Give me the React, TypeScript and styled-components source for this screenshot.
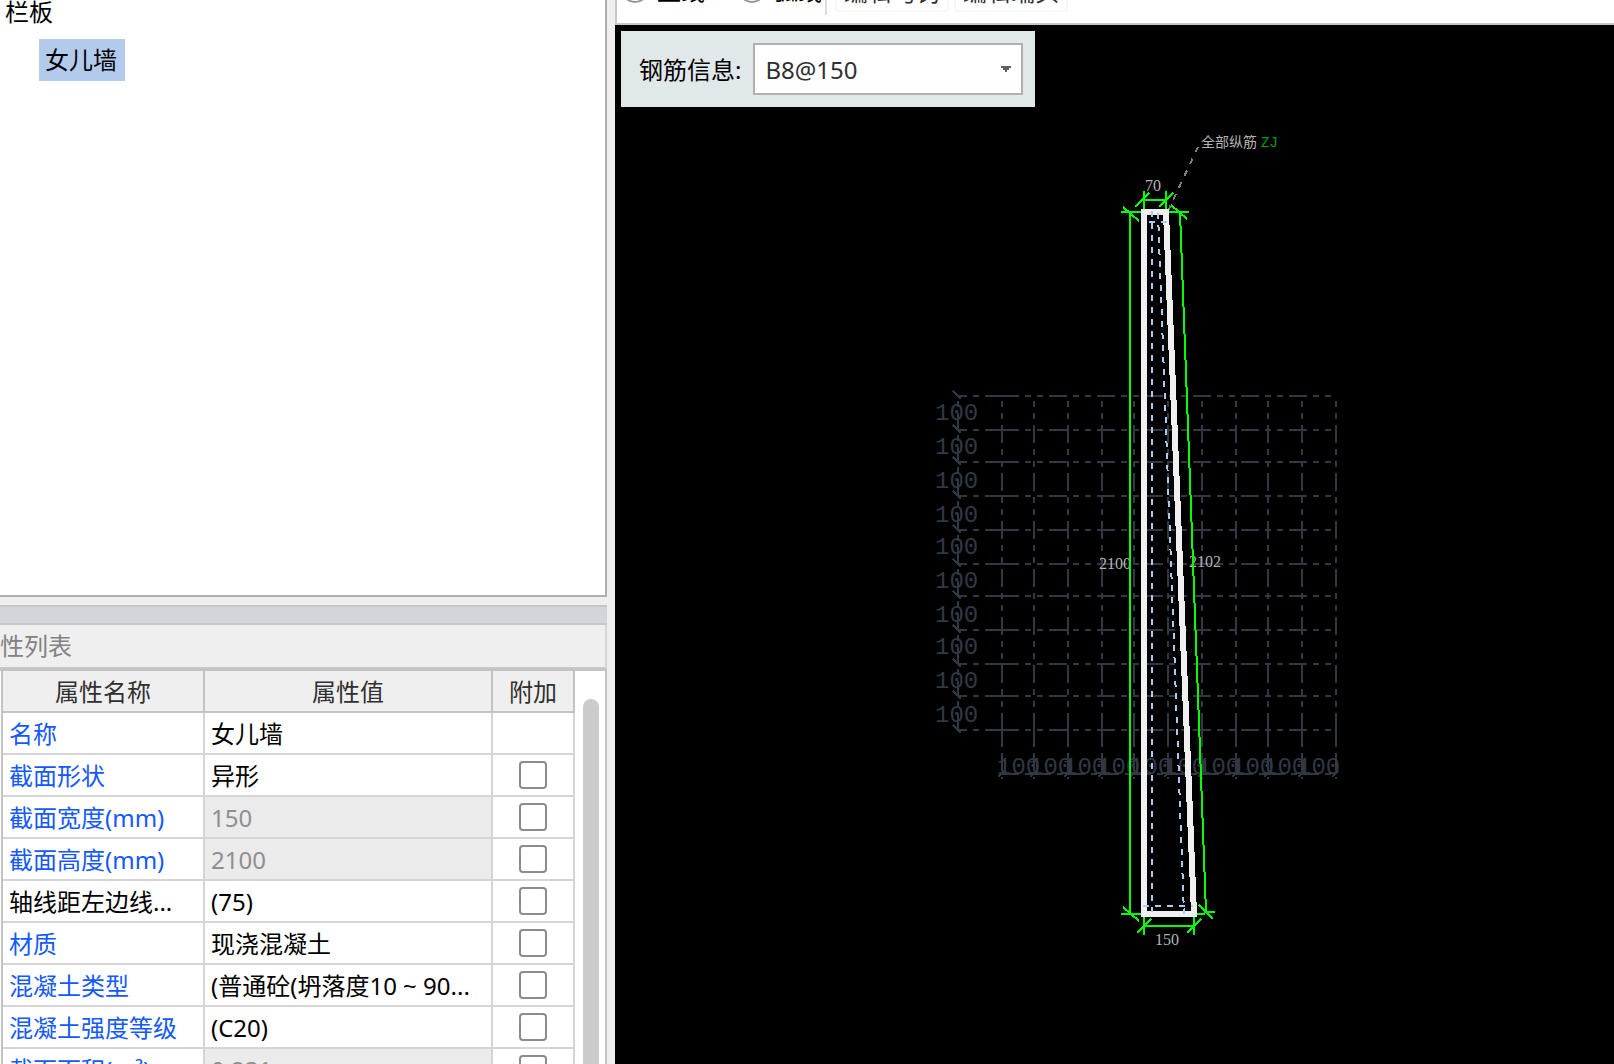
import React from "react";
import styled, { createGlobalStyle } from "styled-components";

const GlobalStyle = createGlobalStyle`
  * { box-sizing: border-box; }
  html, body { margin: 0; height: 100%; overflow: hidden; }
  body, button, input, select {
    font-family: "Noto Sans", "Noto Sans CJK SC", sans-serif;
    font-size: 24px;
    line-height: 32px;
  }
`;

const Window = styled.div`
  display: grid;
  grid-template-columns: minmax(300px, 607px) minmax(0, 1fr);
  grid-template-rows: minmax(0, 1fr);
  column-gap: 8px;
  height: 100vh;
  overflow: hidden;
  background: #efefef;
`;

const Sidebar = styled.aside`
  display: grid;
  grid-template-rows: minmax(0, 597fr) 28px minmax(0, 439fr);
  min-width: 0;
`;

const Tree = styled.nav`
  display: flex;
  flex-direction: column;
  align-items: flex-start;
  background: #fff;
  border: solid #b0b0b0;
  border-width: 0 2px 2px 0;
  overflow: hidden;
`;

const TreeGroup = styled.div`
  height: 39px;
  padding-left: 5px;
  line-height: 24px;
`;

const TreeItem = styled.button`
  height: 42px;
  margin-left: 39px;
  padding: 0 8px 0 6px;
  border: 0;
  color: #000;
  background: #b2cbec;
`;

const Splitter = styled.div`
  height: 20px;
  margin-top: 8px;
  background: #d3d5da;
  border: solid #c3c8cc;
  border-width: 2px 0;
`;

const PropertyPanel = styled.section`
  display: flex;
  flex-direction: column;
  min-height: 0;
`;

const PanelTitle = styled.h2`
  flex: none;
  height: 44px;
  margin: 0;
  font-size: 24px;
  font-weight: 400;
  line-height: 42px;
  color: #828282;
  border-right: 2px solid #d5d5d5;
  border-bottom: 2px solid #c3c8cc;
`;

const TableArea = styled.div`
  display: flex;
  flex: 1;
  min-height: 0;
  overflow: hidden;
  background: #fff;
  border: solid #c3c3c3;
  border-width: 2px 2px 0 0;
`;

const PropertyTable = styled.table`
  flex: 1;
  align-self: flex-start;
  min-width: 0;
  table-layout: fixed;
  border-collapse: separate;
  border-spacing: 0;
  margin-left: 1px;
  border-left: 2px solid #c3c3c3;
`;

const Column = styled.col<{ $width?: number }>`
  width: ${(p) => (p.$width ? `${p.$width}px` : "auto")};
`;

const HeadCell = styled.th`
  height: 42px;
  padding: 2px 0 0;
  font-weight: 400;
  color: #303030;
  background: #efefef;
  border: solid #c3c3c3;
  border-width: 0 2px 2px 0;
`;

const Cell = styled.td<{ $tone?: "link" | "muted" }>`
  height: 42px;
  padding: 2px 0 0 6px;
  overflow: hidden;
  white-space: nowrap;
  line-height: 38px;
  color: ${(p) => (p.$tone === "link" ? "#1459ff" : p.$tone === "muted" ? "#8f8f8f" : "#000")};
  background: ${(p) => (p.$tone === "muted" ? "#ebebeb" : "#fff")};
  border: solid #d5d5d5;
  border-width: 0 2px 2px 0;
`;

const CheckCell = styled(Cell)`
  padding: 0;
  text-align: center;
`;

const CheckBox = styled.input`
  display: block;
  appearance: none;
  width: 28px;
  height: 28px;
  margin: 0 auto;
  background: #fff;
  border: 2px solid #8c8c8c;
  border-radius: 4px;
  &:checked { background: #1459ff; }
`;

const ScrollTrack = styled.div`
  flex: none;
  width: 30px;
  padding: 28px 6px 0 8px;
`;

const ScrollThumb = styled.div`
  height: 100%;
  background: #cbcbcb;
  border-radius: 8px 8px 0 0;
`;

const Editor = styled.main`
  display: flex;
  flex-direction: column;
  min-width: 0;
  min-height: 0;
`;

const Toolbar = styled.div`
  display: flex;
  flex: none;
  align-items: flex-end;
  height: 25px;
  padding-bottom: 11px;
  overflow: hidden;
  background: #fff;
  border: solid #c3c8cc;
  border-width: 0 0 2px 2px;
`;

const ModeOption = styled.label`
  display: flex;
  flex: none;
  align-items: center;
  gap: 8px;
  width: 117px;
  height: 38px;
  padding: 0 0 4px 4px;
`;

const Radio = styled.input`
  appearance: none;
  width: 28px;
  height: 28px;
  margin: 0 0 4px;
  border: 2px solid #969696;
  border-radius: 50%;
`;

const Divider = styled.span`
  flex: none;
  width: 2px;
  height: 36px;
  margin: 0 8px -3px -26px;
  background: #dcdcdc;
`;

const ToolButton = styled.button`
  flex: none;
  width: 114px;
  height: 38px;
  margin-right: 5px;
  padding: 0 0 4px;
  white-space: nowrap;
  color: #303030;
  background: #fff;
  border: 2px solid #f8f8f8;
  border-radius: 4px;
`;

const Canvas = styled.div`
  position: relative;
  flex: 1;
  min-height: 0;
  background: #000;
`;

const Drawing = styled.svg`
  display: block;
  width: 100%;
  height: 100%;
  shape-rendering: crispEdges;
`;

const RebarBar = styled.div`
  position: absolute;
  top: 6px;
  left: 6px;
  display: flex;
  align-items: center;
  gap: 12px;
  padding: 12px 12px 12px 18px;
  background: #e1e8ea;
`;

const RebarLabel = styled.label`
  padding-top: 2px;
`;

const SelectBox = styled.div`
  position: relative;
  display: flex;
  align-items: center;
`;

const RebarSelect = styled.select`
  appearance: none;
  width: 270px;
  height: 52px;
  padding: 2px 32px 0 10px;
  color: #303030;
  background: #fff;
  border: 2px solid #b0b0b0;
  border-radius: 0;
`;

const Caret = styled.svg`
  position: absolute;
  right: 12px;
  pointer-events: none;
`;

const GridText = styled.text`
  font-family: "Liberation Mono", monospace;
  font-size: 24px;
  fill: #303844;
`;

const DimText = styled.text`
  font-family: "Liberation Serif", serif;
  font-size: 16px;
  fill: #b4b4b4;
`;

const NoteText = styled.text`
  font-family: "Noto Sans CJK SC", sans-serif;
  font-size: 14px;
  fill: #b4b4b4;
`;

const MarkText = styled.text`
  font-family: "Liberation Mono", monospace;
  font-size: 14px;
  fill: #00a000;
`;

type Property = { name: string; value: string; plain?: boolean; muted?: boolean; noCheck?: boolean };

const properties: Property[] = [
  { name: "名称", value: "女儿墙", noCheck: true },
  { name: "截面形状", value: "异形" },
  { name: "截面宽度(mm)", value: "150", muted: true },
  { name: "截面高度(mm)", value: "2100", muted: true },
  { name: "轴线距左边线...", value: "(75)", plain: true },
  { name: "材质", value: "现浇混凝土" },
  { name: "混凝土类型", value: "(普通砼(坍落度10 ~ 90..." },
  { name: "混凝土强度等级", value: "(C20)" },
  { name: "截面面积(m²)", value: "0.231", muted: true },
];

const gridRows = [396, 430, 462, 496, 530, 564, 596, 630, 664, 696, 730];
const gridColumns = [1002, 1034, 1068, 1102, 1134, 1168, 1202, 1236, 1268, 1302, 1336];
const rowLabels = [420, 454, 488, 522, 554, 588, 622, 654, 688, 722];

function SectionDrawing() {
  return (
    <Drawing viewBox="615 25 999 1039" role="img" aria-label="女儿墙">
      <g stroke="#303844" strokeWidth="2" fill="none">
        {gridRows.map((y) => (
          <g key={y}>
            <path d={`M957 ${y}H1003`} strokeDasharray="10 6 6 6 18" />
            <path d={`M1001 ${y}H1337`} strokeDasharray="18 6 6 6 6 6" />
            <path d={`M953 ${y - 5}L961 ${y + 3}`} />
          </g>
        ))}
        {gridColumns.map((x) => (
          <g key={x}>
            <path d={`M${x} 395V731`} strokeDasharray="18 6 6 6 6 6" strokeDashoffset="18" />
            <path d={`M${x} 731V779`} strokeDasharray="16 6 18 6 2" />
            <path d={`M${x - 4} 777L${x + 2} 771`} />
          </g>
        ))}
        {gridRows.slice(0, -1).map((y) => (
          <path key={y} d={`M958 ${y + 5}V${y + 33}`} strokeDasharray="6 6 16" />
        ))}
        {gridColumns.slice(0, -1).map((x) => (
          <path key={x} d={`M${x - 1} 774H${x + 33}`} strokeDasharray="18 6 6 2" />
        ))}
      </g>
      {rowLabels.map((y) => (
        <GridText key={y} x="935" y={y}>100</GridText>
      ))}
      {gridColumns.slice(0, -1).map((x) => (
        <GridText key={x} x={x - 5} y="774">100</GridText>
      ))}

      <DimText x="1099" y="569">2100</DimText>
      <DimText x="1189" y="567">2102</DimText>
      <DimText x="1145" y="191">70</DimText>
      <DimText x="1155" y="945">150</DimText>
      <NoteText x="1201" y="147">全部纵筋</NoteText>
      <MarkText x="1261" y="147">ZJ</MarkText>
      <path d="M1198 147L1168 211" stroke="#808080" strokeWidth="2" strokeDasharray="6 7" />

      <g stroke="#00ff00" strokeWidth="2" fill="none">
        <path d="M1130 212V914M1121 212H1141M1123 207L1139 221" />
        <path d="M1121 914H1141M1123 907L1139 921" />
        <path d="M1180 212L1206 912M1168 212H1189M1171 205L1187 219" />
        <path d="M1195 914H1205M1204 912H1215M1199 905L1213 919" />
        <path d="M1144 191V211M1166 191V211M1141 200H1167M1135 207L1149 193M1159 207L1173 193" />
        <path d="M1144 915V935M1194 915V935M1143 926H1195M1137 933L1151 919M1187 933L1201 919" />
      </g>
      <path d="M1144 212H1166L1194 914H1144Z" stroke="#f0f0f0" strokeWidth="6" fill="none" />
      <g stroke="#a8ccf0" strokeWidth="2" strokeDasharray="6 6" fill="none">
        <path d="M1152 211V912" />
        <path d="M1158 213L1184 914" />
        <path d="M1143 906H1193" />
        <path d="M1167 222H1145" />
      </g>
    </Drawing>
  );
}

export default function App() {
  return (
    <>
      <GlobalStyle />
      <Window>
        <Sidebar>
          <Tree>
            <TreeGroup>栏板</TreeGroup>
            <TreeItem type="button">女儿墙</TreeItem>
          </Tree>
          <Splitter />
          <PropertyPanel>
            <PanelTitle>性列表</PanelTitle>
            <TableArea>
              <PropertyTable>
                <colgroup>
                  <Column $width={202} />
                  <Column />
                  <Column $width={82} />
                </colgroup>
                <thead>
                  <tr>
                    <HeadCell>属性名称</HeadCell>
                    <HeadCell>属性值</HeadCell>
                    <HeadCell>附加</HeadCell>
                  </tr>
                </thead>
                <tbody>
                  {properties.map((p) => (
                    <tr key={p.name}>
                      <Cell $tone={p.plain ? undefined : "link"}>{p.name}</Cell>
                      <Cell $tone={p.muted ? "muted" : undefined}>{p.value}</Cell>
                      <CheckCell>
                        {!p.noCheck && <CheckBox type="checkbox" aria-label={p.name} />}
                      </CheckCell>
                    </tr>
                  ))}
                </tbody>
              </PropertyTable>
              <ScrollTrack>
                <ScrollThumb />
              </ScrollTrack>
            </TableArea>
          </PropertyPanel>
        </Sidebar>
        <Editor>
          <Toolbar>
            <ModeOption>
              <Radio type="radio" name="mode" />
              <span>直线</span>
            </ModeOption>
            <ModeOption>
              <Radio type="radio" name="mode" />
              <span>弧线</span>
            </ModeOption>
            <Divider />
            <ToolButton type="button">编辑弯钩</ToolButton>
            <ToolButton type="button">编辑端头</ToolButton>
          </Toolbar>
          <Canvas>
            <SectionDrawing />
            <RebarBar>
              <RebarLabel htmlFor="rebar">钢筋信息:</RebarLabel>
              <SelectBox>
                <RebarSelect id="rebar" defaultValue="B8@150">
                  <option>B8@150</option>
                </RebarSelect>
                <Caret width="10" height="6" viewBox="0 0 10 6">
                  <path d="M0 0H10V2H8V4H6V6H4V4H2V2H0Z" fill="#606060" />
                </Caret>
              </SelectBox>
            </RebarBar>
          </Canvas>
        </Editor>
      </Window>
    </>
  );
}
